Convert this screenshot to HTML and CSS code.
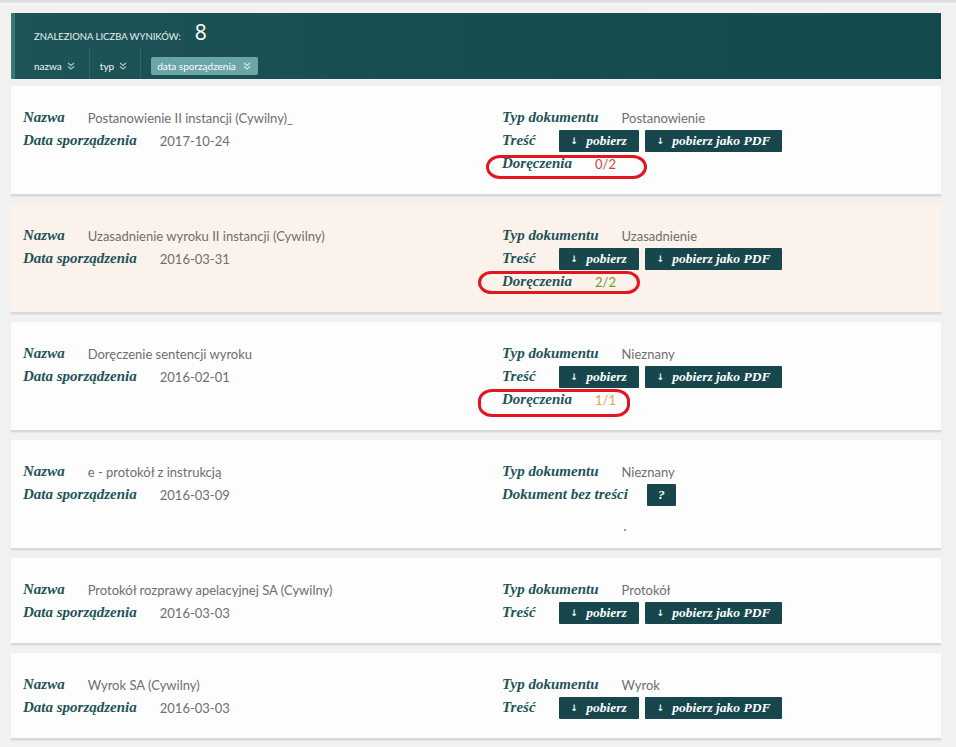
FILE: index.html
```html
<!DOCTYPE html>
<html lang="pl">
<head>
<meta charset="utf-8">
<title>Wyniki</title>
<link rel="stylesheet" href="styles.css">
</head>
<body>
<div class="topline"></div>
<div class="page">
  <div class="results-header">
    <div class="count-row">
      <span class="count-label">Znaleziona liczba wyników:</span>
      <span class="count">8</span>
    </div>
    <div class="sort-row">
      <span class="sort">nazwa <svg class="chev" viewBox="0 0 8 8" width="8" height="8"><path d="M1 1 L4 3.5 L7 1 M1 4.5 L4 7 L7 4.5" fill="none" stroke="currentColor" stroke-width="1.3"/></svg></span>
      <span class="sort">typ <svg class="chev" viewBox="0 0 8 8" width="8" height="8"><path d="M1 1 L4 3.5 L7 1 M1 4.5 L4 7 L7 4.5" fill="none" stroke="currentColor" stroke-width="1.3"/></svg></span>
      <span class="sort sort-active"><span class="pill">data sporządzenia <svg class="chev" viewBox="0 0 8 8" width="8" height="8"><path d="M1 1 L4 3.5 L7 1 M1 4.5 L4 7 L7 4.5" fill="none" stroke="currentColor" stroke-width="1.3"/></svg></span></span>
    </div>
  </div>

  <div class="list">
    <div class="card">
      <div class="col">
        <div class="row"><span class="lbl">Nazwa</span><span class="val">Postanowienie II instancji (Cywilny)_</span></div>
        <div class="row"><span class="lbl">Data sporządzenia</span><span class="val">2017-10-24</span></div>
      </div>
      <div class="col">
        <div class="row"><span class="lbl">Typ dokumentu</span><span class="val">Postanowienie</span></div>
        <div class="row"><span class="lbl">Treść</span><span class="btn"><span class="arr">↓</span>pobierz</span><span class="btn"><span class="arr">↓</span>pobierz jako PDF</span></div>
        <div class="row mark-wrap"><span class="lbl">Doręczenia</span><span class="val st-red">0/2</span><span class="mark mark-a"></span></div>
      </div>
    </div>

    <div class="card card-warm">
      <div class="col">
        <div class="row"><span class="lbl">Nazwa</span><span class="val">Uzasadnienie wyroku II instancji (Cywilny)</span></div>
        <div class="row"><span class="lbl">Data sporządzenia</span><span class="val">2016-03-31</span></div>
      </div>
      <div class="col">
        <div class="row"><span class="lbl">Typ dokumentu</span><span class="val">Uzasadnienie</span></div>
        <div class="row"><span class="lbl">Treść</span><span class="btn"><span class="arr">↓</span>pobierz</span><span class="btn"><span class="arr">↓</span>pobierz jako PDF</span></div>
        <div class="row mark-wrap"><span class="lbl">Doręczenia</span><span class="val st-green">2/2</span><span class="mark mark-b"></span></div>
      </div>
    </div>

    <div class="card">
      <div class="col">
        <div class="row"><span class="lbl">Nazwa</span><span class="val">Doręczenie sentencji wyroku</span></div>
        <div class="row"><span class="lbl">Data sporządzenia</span><span class="val">2016-02-01</span></div>
      </div>
      <div class="col">
        <div class="row"><span class="lbl">Typ dokumentu</span><span class="val">Nieznany</span></div>
        <div class="row"><span class="lbl">Treść</span><span class="btn"><span class="arr">↓</span>pobierz</span><span class="btn"><span class="arr">↓</span>pobierz jako PDF</span></div>
        <div class="row mark-wrap"><span class="lbl">Doręczenia</span><span class="val st-orange">1/1</span><span class="mark mark-c"></span></div>
      </div>
    </div>

    <div class="card">
      <div class="col">
        <div class="row"><span class="lbl">Nazwa</span><span class="val">e - protokół z instrukcją</span></div>
        <div class="row"><span class="lbl">Data sporządzenia</span><span class="val">2016-03-09</span></div>
      </div>
      <div class="col">
        <div class="row"><span class="lbl">Typ dokumentu</span><span class="val">Nieznany</span></div>
        <div class="row"><span class="lbl lbl-tight">Dokument bez treści</span><span class="btn btn-q">?</span></div>
        <div class="row"><span class="dot"></span></div>
      </div>
    </div>

    <div class="card">
      <div class="col">
        <div class="row"><span class="lbl">Nazwa</span><span class="val">Protokół rozprawy apelacyjnej SA (Cywilny)</span></div>
        <div class="row"><span class="lbl">Data sporządzenia</span><span class="val">2016-03-03</span></div>
      </div>
      <div class="col">
        <div class="row"><span class="lbl">Typ dokumentu</span><span class="val">Protokół</span></div>
        <div class="row"><span class="lbl">Treść</span><span class="btn"><span class="arr">↓</span>pobierz</span><span class="btn"><span class="arr">↓</span>pobierz jako PDF</span></div>
      </div>
    </div>

    <div class="card">
      <div class="col">
        <div class="row"><span class="lbl">Nazwa</span><span class="val">Wyrok SA (Cywilny)</span></div>
        <div class="row"><span class="lbl">Data sporządzenia</span><span class="val">2016-03-03</span></div>
      </div>
      <div class="col">
        <div class="row"><span class="lbl">Typ dokumentu</span><span class="val">Wyrok</span></div>
        <div class="row"><span class="lbl">Treść</span><span class="btn"><span class="arr">↓</span>pobierz</span><span class="btn"><span class="arr">↓</span>pobierz jako PDF</span></div>
      </div>
    </div>
  </div>
</div>
</body>
</html>
```

FILE: styles.css
```css
* { box-sizing: border-box; }
html, body { margin: 0; padding: 0; }
body {
  background: #f1f1f1;
  font-family: Lato, "Open Sans", sans-serif;
  color: #6b6b6b;
  width: 956px;
  height: 747px;
  overflow: hidden;
}
.topline {
  height: 3px;
  background: #dcdcdc;
  border-bottom: 1px solid #e8e8e8;
}
.page {
  padding: 10px 15px 0 11px;
}
.results-header {
  height: 66px;
  background: linear-gradient(90deg, #1d5457 0%, #194e51 40%, #154a4d 100%);
  border-left: 4px solid #3b7777;
  padding-left: 19px;
  color: #fff;
}
.count-row {
  height: 35px;
  display: flex;
  align-items: baseline;
  padding-top: 6px;
}
.count-label {
  font-size: 9.5px;
  text-transform: uppercase;
  color: #e8f0f0;
}
.count {
  font-family: "Open Sans", sans-serif;
  font-size: 21px;
  margin-left: 14px;
  line-height: 26px;
}
.sort-row {
  height: 31px;
  display: flex;
  align-items: stretch;
}
.sort {
  display: flex;
  align-items: center;
  padding: 4px 13px 0 10px;
  font-size: 10px;
  color: #f2f6f6;
  border-left: 1px solid #2f6668;
}
.sort:first-child { border-left: 0; padding-left: 0; padding-right: 14px; }
.chev {
  margin-left: 5px;
  color: #9fc4c4;
}
.pill {
  display: flex;
  align-items: center;
  height: 18px;
  padding: 0 7px 0 6px;
  background: #6aa6a6;
  border-radius: 2px;
  color: #fff;
}
.pill .chev { color: #cfe4e4; margin-left: 7px; }

.list {
  padding-top: 7px;
  display: flex;
  flex-direction: column;
  gap: 8px;
}
.card {
  display: grid;
  grid-template-columns: 479px 1fr;
  background: #fdfdfd;
  border-bottom: 2px solid #d9d9d9;
  padding: 20px 12px 19px 12px;
  box-shadow: 0 1px 1px rgba(0,0,0,0.04);
}
.card-warm { background: #fcf2ec; }
.row {
  height: 23px;
  display: flex;
  align-items: center;
  white-space: nowrap;
}
.lbl {
  font-family: "Liberation Serif", serif;
  font-weight: bold;
  font-style: italic;
  font-size: 15px;
  color: #1d5357;
  margin-right: 23px;
}
.lbl-tight { margin-right: 19px; }
.val {
  font-size: 13px;
  color: #6e6e6e;
}
.st-red { color: #d0443c; }
.st-green { color: #6b9a2e; }
.st-orange { color: #e8a24a; }
.btn {
  display: inline-flex;
  align-items: center;
  height: 22px;
  padding: 0 12px 0 12px;
  margin-right: 6px;
  background: #17474c;
  color: #fff;
  font-family: "Liberation Serif", serif;
  font-weight: bold;
  font-style: italic;
  font-size: 13.5px;
  border-radius: 1px;
}
.arr {
  font-family: "DejaVu Sans", sans-serif;
  font-style: normal;
  font-size: 9px;
  margin-right: 8px;
}
.btn-q {
  padding: 0;
  width: 29px;
  justify-content: center;
}
.dot {
  width: 2px;
  height: 2px;
  background: #9a9a9a;
  margin: 25px 0 0 122px;
}
.mark-wrap { position: relative; }
.mark {
  position: absolute;
  border: 3px solid #e3161f;
  border-radius: 14px / 12px;
  pointer-events: none;
}
.mark-a { left: -16px; top: 3px; width: 161px; height: 24px; }
.mark-b { left: -24px; top: 1px; width: 162px; height: 23px; }
.mark-c { left: -24px; top: 1px; width: 152px; height: 28px; }
```
